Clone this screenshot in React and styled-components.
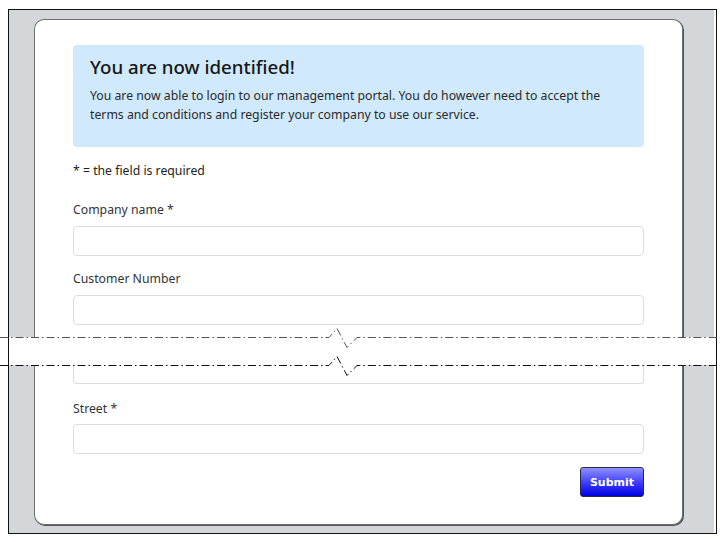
import React from "react";
import styled, { createGlobalStyle } from "styled-components";

const Global = createGlobalStyle`
  html, body { margin: 0; padding: 0; background: #fff; }
  body { padding: 9px 0 0 8px; font-family: "Noto Sans", "Open Sans", sans-serif; }
  * { box-sizing: border-box; }
`;

const Frame = styled.div`
  width: 709px;
  height: 525px;
  border: 1px solid #111;
  background: #d4d7da;
  box-shadow: inset -2px 0 0 #fff;
  padding-top: 9px;
  display: flex;
  flex-direction: column;
`;

const CardPart = styled.div`
  margin: 0 33px 0 25px;
  background: #fff;
  border: 1px solid #6f6f6f;
  box-shadow: 1px 1px 0 #555;
  padding: ${(p) => (p.$top ? "25px 38px 0" : "0 38px 27px")};
  height: ${(p) => p.$h}px;
  border-radius: ${(p) => (p.$top ? "10px 10px 0 0" : "0 0 10px 10px")};
  ${(p) => (p.$top ? "border-bottom: none;" : "border-top: none;")}
  display: flex;
  flex-direction: column;
`;

const Alert = styled.div`
  background: #d0e9fc;
  border-radius: 4px;
  height: 102px;
  padding: 10px 17px 0;
  color: #222;
`;

const AlertTitle = styled.h4`
  margin: 0 0 7px;
  font-size: 18.7px;
  font-weight: 500;
  line-height: 24px;
  color: #161616;
`;

const AlertText = styled.p`
  margin: 0;
  font-size: 12.25px;
  line-height: 19px;
  color: #2a2a2a;
`;

const Note = styled.p`
  margin: 14px 0 0;
  font-size: 12.25px;
  line-height: 20px;
  color: #222;
`;

const Label = styled.label`
  display: block;
  margin-top: ${(p) => p.$mt}px;
  font-size: 12.25px;
  line-height: 20px;
  color: #333;
`;

const Input = styled.input`
  display: block;
  width: 100%;
  height: 30px;
  margin-top: ${(p) => p.$mt ?? 7}px;
  border: 1px solid #dadde1;
  border-radius: 4px;
  background: #fff;
  outline: none;
`;

const InputStub = styled.div`
  height: 19px;
  border: 1px solid #dadde1;
  border-top: none;
  border-radius: 0 0 4px 4px;
`;

const Tear = styled.div`
  height: 28px;
  background: #fff;
  position: relative;
  margin-right: 2px;
`;

const TearSvg = styled.svg`
  position: absolute;
  left: -9px;
  top: -1px;
  overflow: visible;
`;

const Actions = styled.div`
  display: flex;
  justify-content: flex-end;
  margin-top: 13px;
`;

const Button = styled.button`
  width: 64px;
  height: 30px;
  border: 1px solid #2a2a3a;
  border-radius: 3px;
  background: linear-gradient(#9090ff, #3a3aff 55%, #0000e0);
  color: #fff;
  font-family: "DejaVu Sans", Verdana, sans-serif;
  font-weight: bold;
  font-size: 11px;
  padding: 0;
  cursor: pointer;
`;

function TearLine({ y, color }) {
  const d = `M0 ${y} L329 ${y} L337 ${y - 9} L347 ${y + 10} L357 ${y} L720 ${y}`;
  return (
    <path
      d={d}
      fill="none"
      stroke={color}
      strokeWidth="1"
      strokeDasharray="8 3 1.5 3"
    />
  );
}

export default function App() {
  return (
    <>
      <Global />
      <Frame>
        <CardPart $top $h={318}>
          <Alert>
            <AlertTitle>You are now identified!</AlertTitle>
            <AlertText>
              You are now able to login to our management portal. You do however need to accept the
              terms and conditions and register your company to use our service.
            </AlertText>
          </Alert>
          <Note>* = the field is required</Note>
          <Label $mt={19}>Company name *</Label>
          <Input $mt={6} />
          <Label $mt={13}>Customer Number</Label>
          <Input $mt={6} />
        </CardPart>
        <Tear>
          <TearSvg width="716" height="30">
            <TearLine y={1.5} color="#555" />
            <TearLine y={29.5} color="#111" />
          </TearSvg>
        </Tear>
        <CardPart $h={160}>
          <InputStub />
          <Label $mt={15}>Street *</Label>
          <Input $mt={5} />
          <Actions>
            <Button>Submit</Button>
          </Actions>
        </CardPart>
      </Frame>
    </>
  );
}
